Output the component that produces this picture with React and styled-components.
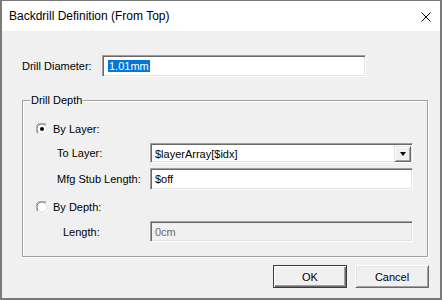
import React from 'react';
import styled, { createGlobalStyle } from 'styled-components';

const Global = createGlobalStyle`
    html, body {
        margin: 0;
        padding: 0;
        background: #ffffff;
    }
    * {
        box-sizing: border-box;
    }
`;

const Window = styled.div`
    width: 442px;
    height: 300px;
    display: flex;
    flex-direction: column;
    border-style: solid;
    border-color: #7a7a7a;
    border-width: 1px 2px 2px 2px;
    background: #f0f0f0;
    font-family: 'Liberation Sans', Arial, sans-serif;
    font-size: 11px;
    color: #000;
`;

const TitleBar = styled.div`
    height: 30px;
    flex-shrink: 0;
    background: #ffffff;
    display: flex;
    align-items: center;
    justify-content: space-between;
    padding: 0 9px 0 7px;
`;

const Title = styled.span`
    font-size: 12px;
    color: #000;
`;

const CloseBtn = styled.div`
    width: 10px;
    height: 10px;
    display: flex;
    margin-top: 1px;
`;

const Body = styled.div`
    flex: 1;
    display: flex;
    flex-direction: column;
    padding: 24px 11px 0 20px;
`;

const Row = styled.div`
    display: flex;
    align-items: center;
    margin-top: ${({ top }) => top || 0}px;
    padding-left: ${({ indent }) => indent || 0}px;
`;

const Label = styled.span`
    width: ${({ w }) => w}px;
    flex-shrink: 0;
    white-space: nowrap;
`;

const Field = styled.div`
    width: ${({ w }) => w}px;
    height: ${({ h }) => h}px;
    display: flex;
    align-items: center;
    padding-left: 4px;
    background: ${({ disabled }) => (disabled ? '#f0f0f0' : '#ffffff')};
    color: ${({ disabled }) => (disabled ? '#6d6d6d' : '#000')};
    border: 1px solid;
    border-color: #a0a0a0 #ffffff #ffffff #a0a0a0;
    box-shadow: inset 1px 1px 0 #696969, inset -1px -1px 0 #e3e3e3;
    white-space: nowrap;
`;

const Selected = styled.span`
    background: #0078d7;
    color: #ffffff;
    padding: 0 1px 0 1px;
    line-height: 12px;
    margin-left: 1px;
`;

const Combo = styled(Field)`
    justify-content: space-between;
    padding: 2px 1px 1px 4px;
`;

const DropBtn = styled.div`
    width: 17px;
    height: 16px;
    display: flex;
    align-items: center;
    justify-content: center;
    background: #f0f0f0;
    border: 1px solid;
    border-color: #e3e3e3 #696969 #696969 #e3e3e3;
    box-shadow: inset 1px 1px 0 #ffffff, inset -1px -1px 0 #a0a0a0;
`;

const Arrow = styled.span`
    width: 0;
    height: 0;
    border-left: 3.5px solid transparent;
    border-right: 3.5px solid transparent;
    border-top: 4px solid #000;
    margin-top: 1px;
`;

const GroupBox = styled.div`
    margin: 23px 1px 0 0;
    padding: 0 14px 14px 0;
    border: 1px solid #a0a0a0;
    box-shadow: inset 1px 1px 0 #ffffff, 1px 1px 0 #ffffff;
    display: flex;
    flex-direction: column;
`;

const Legend = styled.span`
    align-self: flex-start;
    margin: -7px 0 0 7px;
    padding: 0 1px;
    line-height: 13px;
    background: #f0f0f0;
`;

const RadioRow = styled.div`
    display: flex;
    align-items: center;
    height: 13px;
    gap: 5px;
    margin-top: ${({ top }) => top}px;
    padding-left: 13px;
`;

const RadioMark = styled.svg`
    width: 12px;
    height: 12px;
    flex-shrink: 0;
`;

const Radio = ({ checked }) => (
    <RadioMark viewBox="0 0 12 12">
        <path d="M1.5 10.5 A6 6 0 0 1 10.5 1.5" stroke="#a0a0a0" fill="none" strokeWidth="1" />
        <path d="M10.5 1.5 A6 6 0 0 1 1.5 10.5" stroke="#ffffff" fill="none" strokeWidth="1" />
        <path d="M2.4 9.6 A4.9 4.9 0 0 1 9.6 2.4" stroke="#696969" fill="none" strokeWidth="1" />
        <path d="M9.6 2.4 A4.9 4.9 0 0 1 2.4 9.6" stroke="#e3e3e3" fill="none" strokeWidth="1" />
        <circle cx="6" cy="6" r="4.3" fill="#ffffff" />
        {checked && <circle cx="6" cy="6" r="2" fill="#000" />}
    </RadioMark>
);

const Buttons = styled.div`
    display: flex;
    justify-content: flex-end;
    gap: 8px;
    margin-top: 8px;
`;

const Button = styled.div`
    width: 74px;
    height: 23px;
    display: flex;
    align-items: center;
    justify-content: center;
    background: #f0f0f0;
    border: 1px solid;
    border-color: ${({ primary }) => (primary ? '#3c3c3c' : '#ffffff #696969 #696969 #ffffff')};
    box-shadow: ${({ primary }) =>
        primary
            ? 'inset 1px 1px 0 #ffffff, inset -1px -1px 0 #696969, inset -2px -2px 0 #a0a0a0'
            : 'inset 1px 1px 0 #e3e3e3, inset -1px -1px 0 #a0a0a0'};
`;

const App = () => {
    return (
        <Window>
            <Global />
            <TitleBar>
                <Title>Backdrill Definition (From Top)</Title>
                <CloseBtn>
                    <svg width="10" height="10" viewBox="0 0 10 10">
                        <path d="M0.5 0.5 L9.5 9.5 M9.5 0.5 L0.5 9.5" stroke="#000" strokeWidth="1" />
                    </svg>
                </CloseBtn>
            </TitleBar>
            <Body>
                <Row>
                    <Label w={80}>Drill Diameter:</Label>
                    <Field w={264} h={22}>
                        <Selected>1.01mm</Selected>
                    </Field>
                </Row>
                <GroupBox>
                    <Legend>Drill Depth</Legend>
                    <RadioRow top={15}>
                        <Radio checked />
                        <span>By Layer:</span>
                    </RadioRow>
                    <Row top={8} indent={34}>
                        <Label w={93}>To Layer:</Label>
                        <Combo w={263} h={20}>
                            <span>$layerArray[$idx]</span>
                            <DropBtn>
                                <Arrow />
                            </DropBtn>
                        </Combo>
                    </Row>
                    <Row top={5} indent={34}>
                        <Label w={93}>Mfg Stub Length:</Label>
                        <Field w={263} h={22}>$off</Field>
                    </Row>
                    <RadioRow top={10}>
                        <Radio />
                        <span>By Depth:</span>
                    </RadioRow>
                    <Row top={8} indent={40}>
                        <Label w={87}>Length:</Label>
                        <Field w={263} h={21} disabled>
                            0cm
                        </Field>
                    </Row>
                </GroupBox>
                <Buttons>
                    <Button primary>OK</Button>
                    <Button>Cancel</Button>
                </Buttons>
            </Body>
        </Window>
    );
};

export default App;
